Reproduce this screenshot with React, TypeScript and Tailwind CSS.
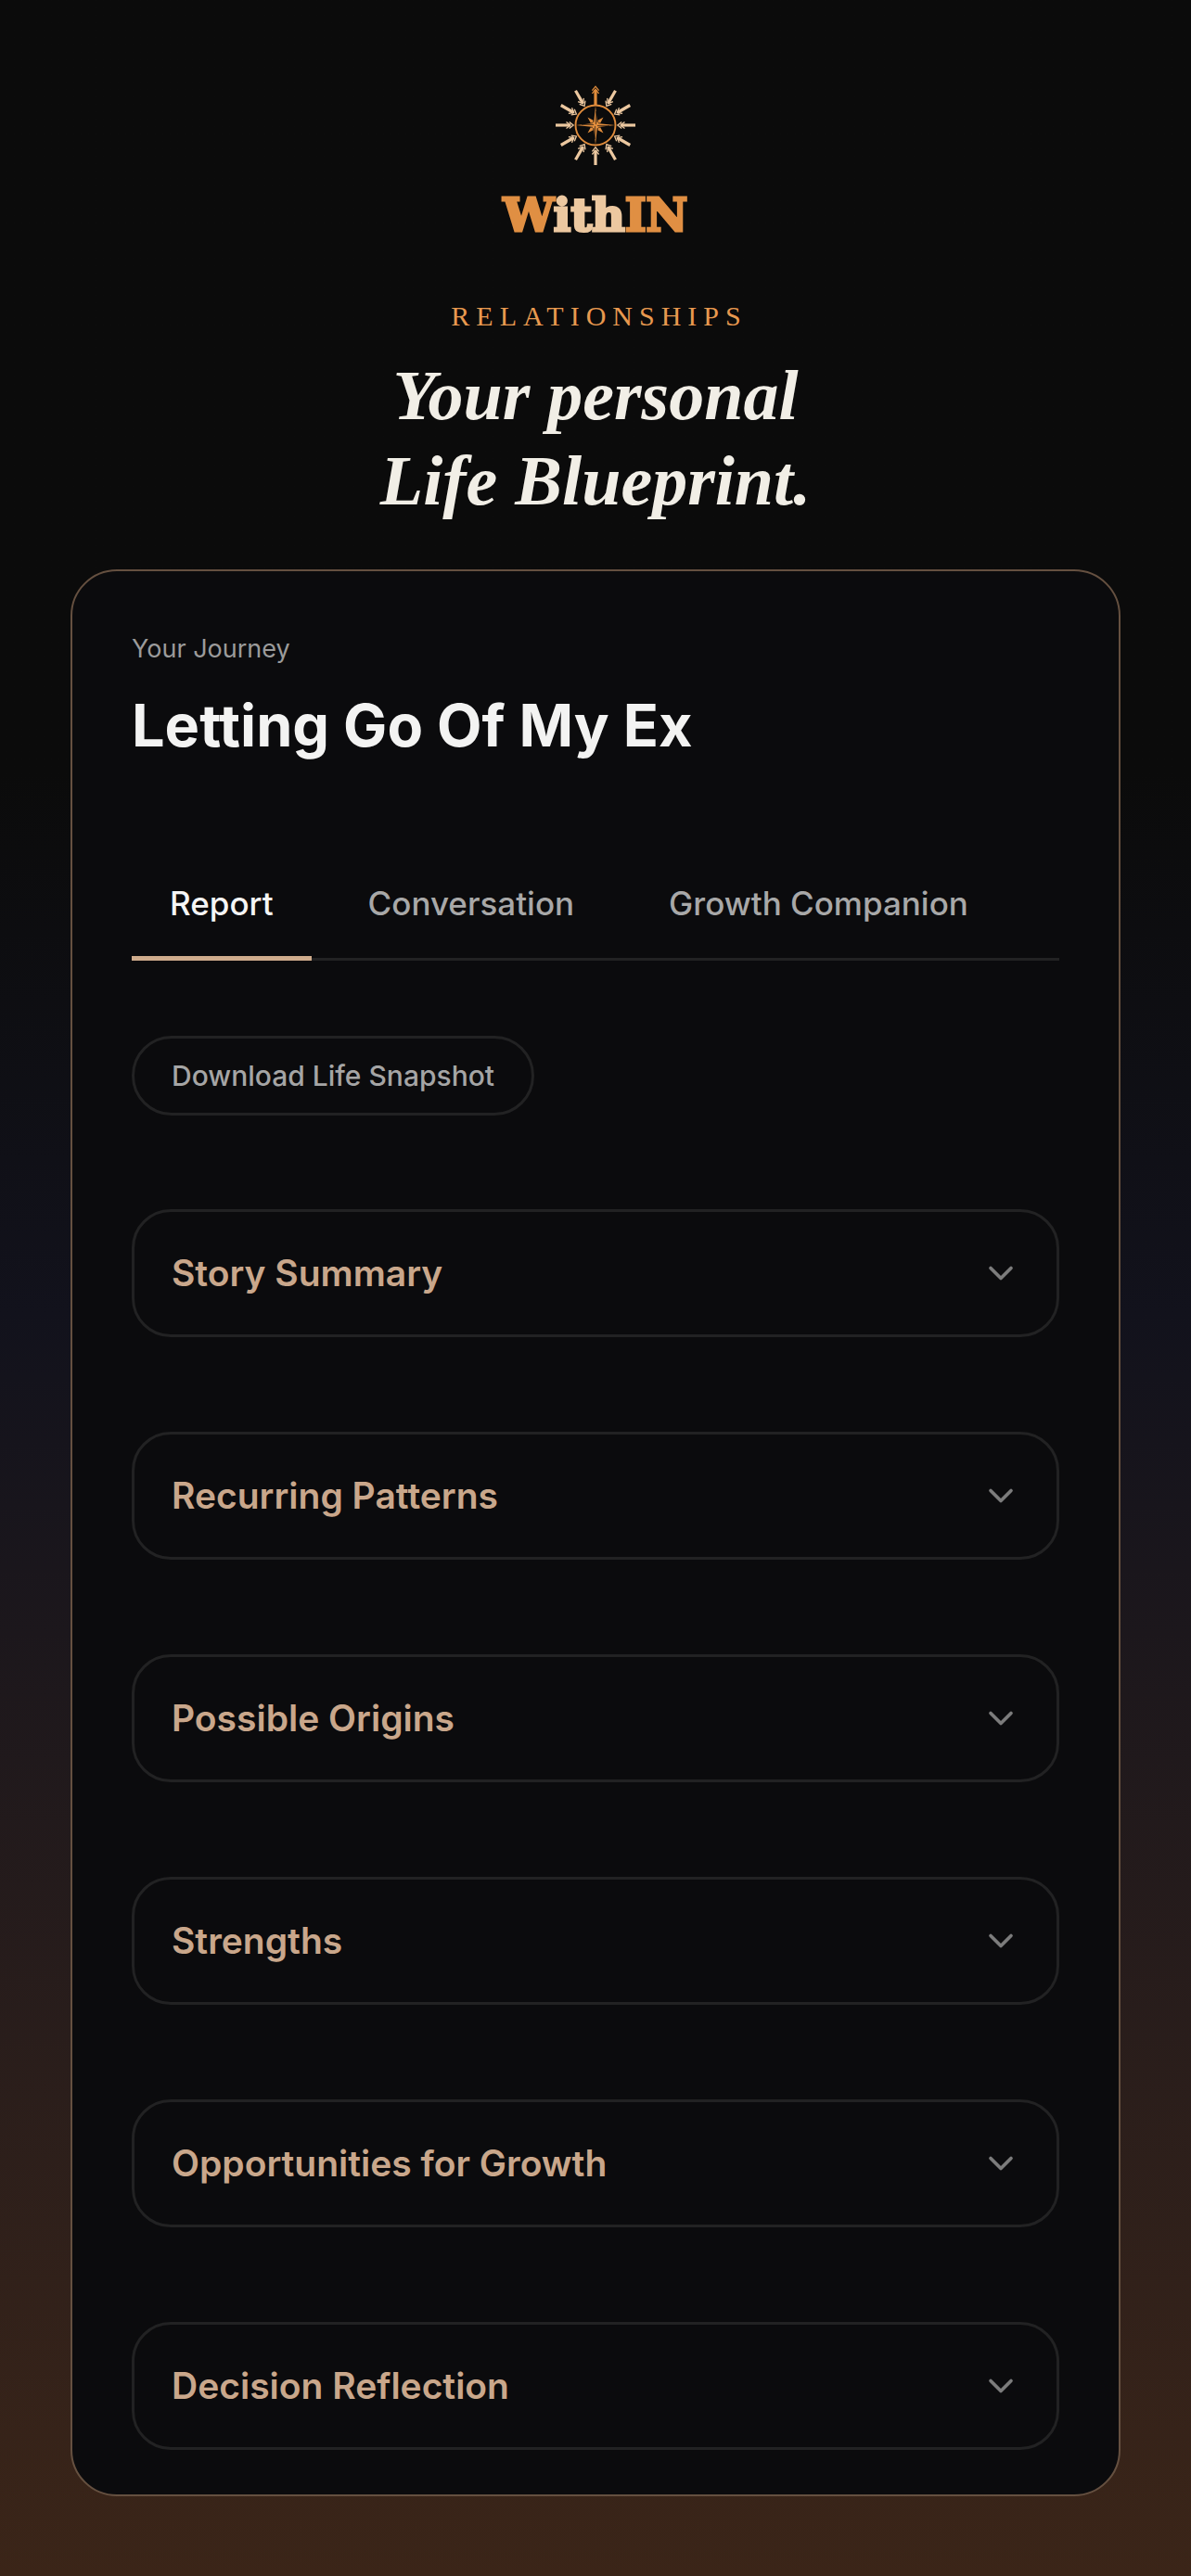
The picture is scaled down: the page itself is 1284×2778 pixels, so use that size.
import { useState } from "react";
import { ChevronDown } from "lucide-react";

const tabs = ["Report", "Conversation", "Growth Companion"];
const sections = [
  "Story Summary",
  "Recurring Patterns",
  "Possible Origins",
  "Strengths",
  "Opportunities for Growth",
  "Decision Reflection",
];
const inward = [30, 60, 90, 120, 150, 180, 210, 240, 270, 300, 330];

function Compass() {
  return (
    <svg viewBox="-44 -44 88 88" className="size-[88px]" aria-hidden="true">
      {inward.map((a) => (
        <g key={a} transform={`rotate(${a})`} fill="none" stroke="#ecc8a0">
          <path d="M0 -43V-27" strokeWidth="3.2" />
          <path d="M-3.600 -31.500L0 -27L3.600 -31.500M-3.600 -28.300L0 -23.800L3.600 -28.300" strokeWidth="1.300" />
        </g>
      ))}
      <g fill="none" stroke="#e08c3c">
        <path d="M0 -22V-38" strokeWidth="3.2" />
        <path d="M-3.600 -37.300L0 -41.800L3.600 -37.300M-3.600 -34.100L0 -38.600L3.600 -34.100" strokeWidth="1.300" />
        <circle r="21.500" strokeWidth="1.900" />
      </g>
      <g fill="#e08c3c">
        <path d="M0 -21L1.900 -1.900L21 0L1.900 1.900L0 21L-1.900 1.900L-21 0L-1.900 -1.900Z" />
        <path d="M-8.500 -8.500L-2 -5L-5 -2ZM8.500 -8.500L5 -2L2 -5ZM8.500 8.500L2 5L5 2ZM-8.500 8.500L-5 2L-2 5Z" />
        <path d="M-5 -5L0 -2L5 -5L2 0L5 5L0 2L-5 5L-2 0Z" />
      </g>
      <path d="M0.500 -15V-1M15 0.500H2M-0.500 15V1M-15 -0.500H-2" fill="none" stroke="#0b0b0b" strokeWidth="0.600" />
    </svg>
  );
}

export default function App() {
  const [tab, setTab] = useState("Report");
  const [open, setOpen] = useState<string | null>(null);
  return (
    <main className="flex min-h-screen flex-col items-center bg-linear-to-b from-[#0b0b0b] from-30% via-[#12121c] via-51% to-[#3b2518] px-[76px] pt-[91px] pb-[87px] font-['Inter',sans-serif]">
      <header className="flex flex-col items-center text-center">
        <Compass />
        <p className="mt-[21px] font-['DejaVu_Serif',serif] text-[49px] leading-[64px] font-bold text-[#e08f43] [-webkit-text-stroke:3px_currentColor]">
          W<span className="text-[#ecc8a0]">ith</span>IN
        </p>
        <p className="mt-[59px] pl-2 font-['Liberation_Serif',serif] text-[30px] leading-9 tracking-[7px] text-[#e8994f]">
          RELATIONSHIPS
        </p>
        <h1 className="mt-[21px] font-['Liberation_Serif',serif] text-[76px] leading-[92px] font-bold text-[#f1eee6] italic">
          Your personal
          <br />
          Life Blueprint.
        </h1>
      </header>

      <section className="mt-[50px] w-full rounded-[50px] border-2 border-[#655040] bg-[#0b0b0d] px-16 pt-[66px] pb-12">
        <p className="text-[27px] leading-9 text-[#9b9b9b]">Your Journey</p>
        <h2 className="mt-6 text-[63px] leading-[80px] font-bold text-[#f3f3f2]">Letting Go Of My Ex</h2>

        <div role="tablist" className="mt-[130px] flex border-b-[3px] border-[#222223]">
          {tabs.map((t) => (
            <button
              key={t}
              role="tab"
              aria-selected={tab === t}
              onClick={() => setTab(t)}
              className={`-mb-[3px] mr-5 border-b-[5px] px-[41px] pb-[35px] text-[35px] leading-[44px] font-medium ${
                tab === t ? "border-[#cfac8c] text-[#f5f5f5]" : "border-transparent text-[#a8a8a8]"
              }`}
            >
              {t}
            </button>
          ))}
        </div>

        <button className="mt-[81px] rounded-full border-[3px] border-[#222223] px-10 py-5 text-[30px] leading-10 font-medium text-[#a5a5a5]">
          Download Life Snapshot
        </button>

        <div className="mt-[101px] flex flex-col gap-[102px]">
          {sections.map((s) => (
            <button
              key={s}
              aria-expanded={open === s}
              onClick={() => setOpen(open === s ? null : s)}
              className="flex items-center justify-between rounded-[42px] border-[3px] border-[#222223] py-[42px] pr-[38px] pl-10 text-left text-[39px] leading-[48px] font-semibold text-[#c9a78b]"
            >
              {s}
              <ChevronDown className="size-11 text-[#7c7c7c]" strokeWidth={2} aria-hidden="true" />
            </button>
          ))}
        </div>
      </section>
    </main>
  );
}
